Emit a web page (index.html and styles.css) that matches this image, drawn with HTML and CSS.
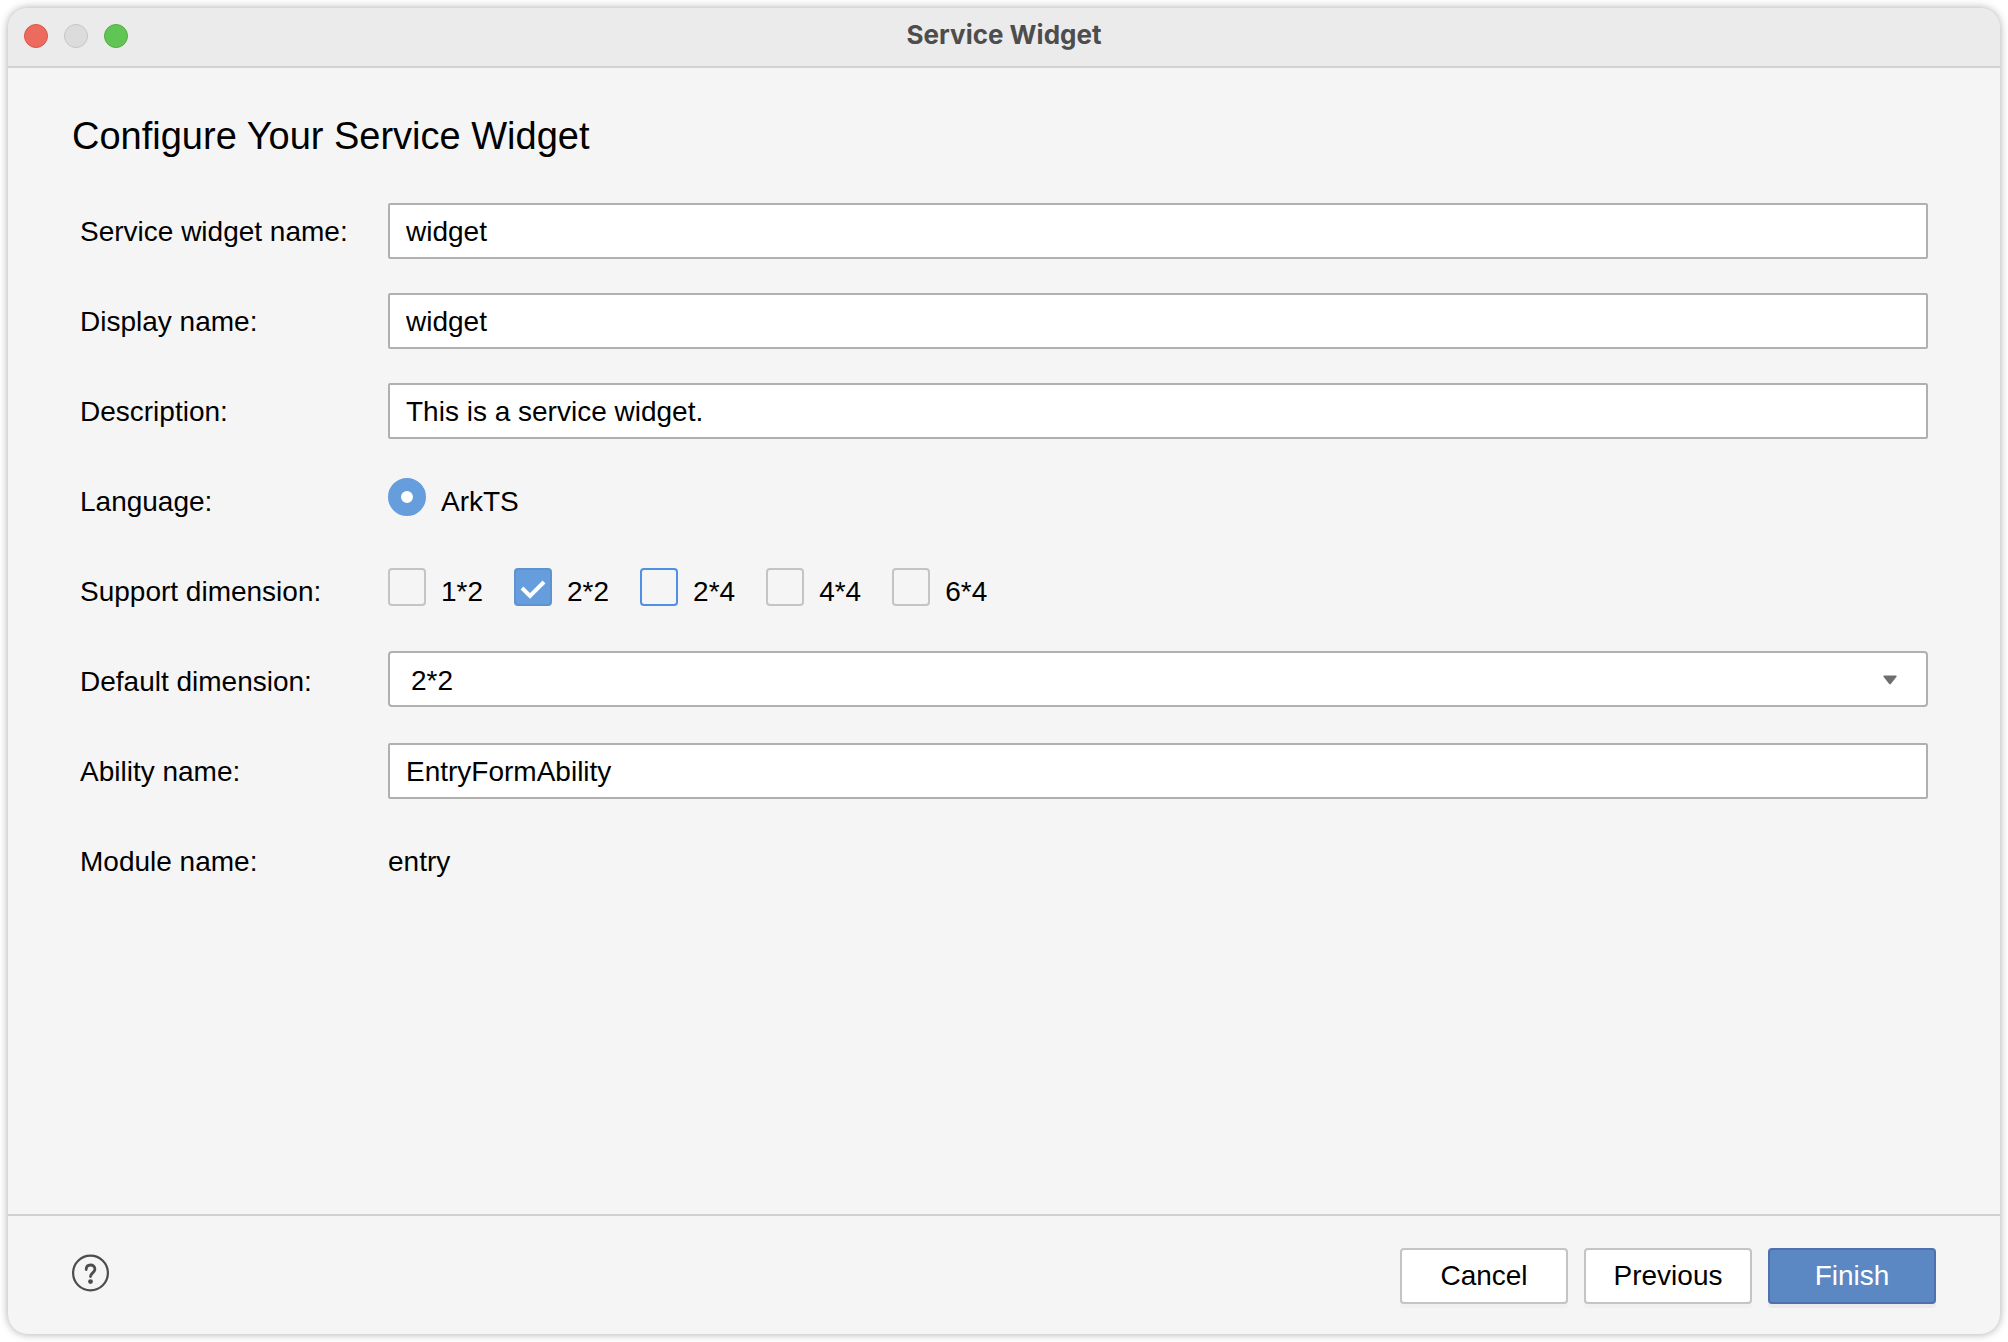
FILE: index.html
```html
<!DOCTYPE html>
<html lang="en">
<head>
  <meta charset="utf-8">
  <title>Service Widget</title>
  <link rel="stylesheet" href="styles.css">
</head>
<body>
  <div class="window">
    <header class="titlebar">
      <div class="lights">
        <span class="light close"></span>
        <span class="light minimize"></span>
        <span class="light zoom"></span>
      </div>
      <div class="title">Service Widget</div>
    </header>

    <main class="content">
      <h1>Configure Your Service Widget</h1>

      <form id="widgetForm" class="form">
        <label for="widgetName">Service widget name:</label>
        <input type="text" id="widgetName" value="widget">

        <label for="displayName">Display name:</label>
        <input type="text" id="displayName" value="widget">

        <label for="description">Description:</label>
        <input type="text" id="description" value="This is a service widget.">

        <span id="languageLabel">Language:</span>
        <div class="options" role="radiogroup" aria-labelledby="languageLabel">
          <label class="option"><input type="radio" name="language" checked>ArkTS</label>
        </div>

        <span id="supportLabel">Support dimension:</span>
        <div class="options" role="group" aria-labelledby="supportLabel">
          <label class="option"><input type="checkbox">1*2</label>
          <label class="option"><input type="checkbox" checked>2*2</label>
          <label class="option"><input type="checkbox" class="active">2*4</label>
          <label class="option"><input type="checkbox">4*4</label>
          <label class="option"><input type="checkbox">6*4</label>
        </div>

        <label for="defaultDimension">Default dimension:</label>
        <div class="select">
          <select id="defaultDimension">
            <option>2*2</option>
          </select>
          <svg class="arrow" width="14" height="10" viewBox="0 0 14 10">
            <path d="M1 0.5h12q1 0.3 0.5 1.2L8 8.8q-1 1-2 0L0.5 1.7Q0 0.8 1 0.5z" fill="#6e6e6e"/>
          </svg>
        </div>

        <label for="abilityName">Ability name:</label>
        <input type="text" id="abilityName" value="EntryFormAbility">

        <span>Module name:</span>
        <span>entry</span>
      </form>
    </main>

    <footer class="footer">
      <button type="button" class="help" aria-label="Help">
        <svg width="38" height="38" viewBox="0 0 38 38" fill="none" stroke="#4d4d4d">
          <circle cx="18.5" cy="19" r="17.4" stroke-width="2.2"/>
          <path d="M14.2 15.6C14.2 12.6 16 11 18.5 11s4.4 1.6 4.4 4.1c0 3.6-4.4 3.9-4.4 7.4" stroke-width="2.8" stroke-linecap="round"/>
          <circle cx="18.5" cy="27.6" r="2.4" fill="#4d4d4d" stroke="none"/>
        </svg>
      </button>
      <div class="buttons">
        <button type="button" class="btn">Cancel</button>
        <button type="button" class="btn">Previous</button>
        <button type="submit" form="widgetForm" class="btn primary">Finish</button>
      </div>
    </footer>
  </div>
</body>
</html>
```
FILE: styles.css
```css
* {
  box-sizing: border-box;
}

body {
  margin: 0;
  padding: 8px;
  min-height: 100vh;
  display: flex;
  background-color: #fff;
  color: #000;
  font-family: "Liberation Sans", Arial, sans-serif;
  font-size: 28px;
  line-height: 32px;
}

input, select, button {
  margin: 0;
  font: inherit;
  color: inherit;
}

.window {
  flex: 1;
  display: flex;
  flex-direction: column;
  background-color: #f5f5f5;
  border-radius: 20px;
  box-shadow: 0 0 8px rgba(0, 0, 0, 0.35);
  overflow: hidden;
}

/* title bar */
.titlebar {
  display: grid;
  grid-template-columns: 1fr auto 1fr;
  align-items: center;
  height: 60px;
  padding: 0 16px 2px;
  background-color: #ebebeb;
  border-bottom: 2px solid #d2d2d2;
}

.lights {
  display: flex;
  gap: 16px;
}

.light {
  width: 24px;
  height: 24px;
  border-radius: 50%;
  border: 1px solid;
}

.close {
  background-color: #ec6a5e;
  border-color: #d85549;
}

.minimize {
  background-color: #dcdcdc;
  border-color: #c4c4c4;
}

.zoom {
  background-color: #61c554;
  border-color: #52ad45;
}

.title {
  padding-bottom: 2px;
  font-family: Inter, sans-serif;
  font-size: 26px;
  font-weight: 700;
  color: #4d4d4d;
}

/* form */
.content {
  flex: 1;
  padding: 48px 72px 0 64px;
}

h1 {
  margin: 0 0 30px;
  font-size: 38px;
  font-weight: normal;
  line-height: 40px;
}

.form {
  display: grid;
  grid-template-columns: 308px 1fr;
  grid-auto-rows: 90px;
  align-items: center;
  padding-left: 8px;
}

.form > label,
.form > span,
.options {
  padding-top: 2px;
}

input[type="text"],
select {
  width: 100%;
  height: 56px;
  padding: 2px 16px 0;
  background-color: #fff;
  border: 2px solid #b0b0b0;
  border-radius: 2px;
  outline: none;
}

.select {
  position: relative;
  height: 56px;
  margin-bottom: 4px;
}

select {
  appearance: none;
  display: block;
  padding: 4px 56px 0 21px;
  border-radius: 4px;
}

.arrow {
  position: absolute;
  top: 24px;
  right: 31px;
  pointer-events: none;
}

.options {
  display: flex;
  gap: 31px;
}

.option {
  display: flex;
  align-items: center;
  gap: 15px;
}

.option input {
  appearance: none;
  width: 38px;
  height: 38px;
  margin-bottom: 10px;
  border: 2px solid #c4c4c4;
  border-radius: 4px;
}

.option input[type="radio"] {
  border: 13px solid #659ddd;
  border-radius: 50%;
  background-color: #fff;
}

.option input.active {
  border-color: #4f8fe6;
}

.option input[type="checkbox"]:checked {
  border-color: #5f93cf;
  background: #659ddd url('data:image/svg+xml,<svg xmlns="http://www.w3.org/2000/svg" viewBox="0 0 34 34"><path d="M6 18l8 8L28 12" fill="none" stroke="white" stroke-width="4"/></svg>') center / 34px no-repeat;
}

/* footer */
.footer {
  display: flex;
  align-items: center;
  justify-content: space-between;
  height: 120px;
  padding: 2px 64px 0;
  border-top: 2px solid #d0d0d0;
}

.help {
  padding: 0 0 6px;
  border: none;
  background: none;
  cursor: pointer;
}

.help svg {
  display: block;
}

.buttons {
  display: flex;
  gap: 16px;
}

.btn {
  width: 168px;
  height: 56px;
  padding: 0;
  background-color: #fff;
  border: 2px solid #c4c4c4;
  border-radius: 4px;
  box-shadow: 0 4px 0 #f0f0f0;
  cursor: pointer;
}

.primary {
  background-color: #5b88c3;
  border-color: #4f6fae;
  color: #fff;
  box-shadow: 0 4px 0 #ebebeb;
}
```
